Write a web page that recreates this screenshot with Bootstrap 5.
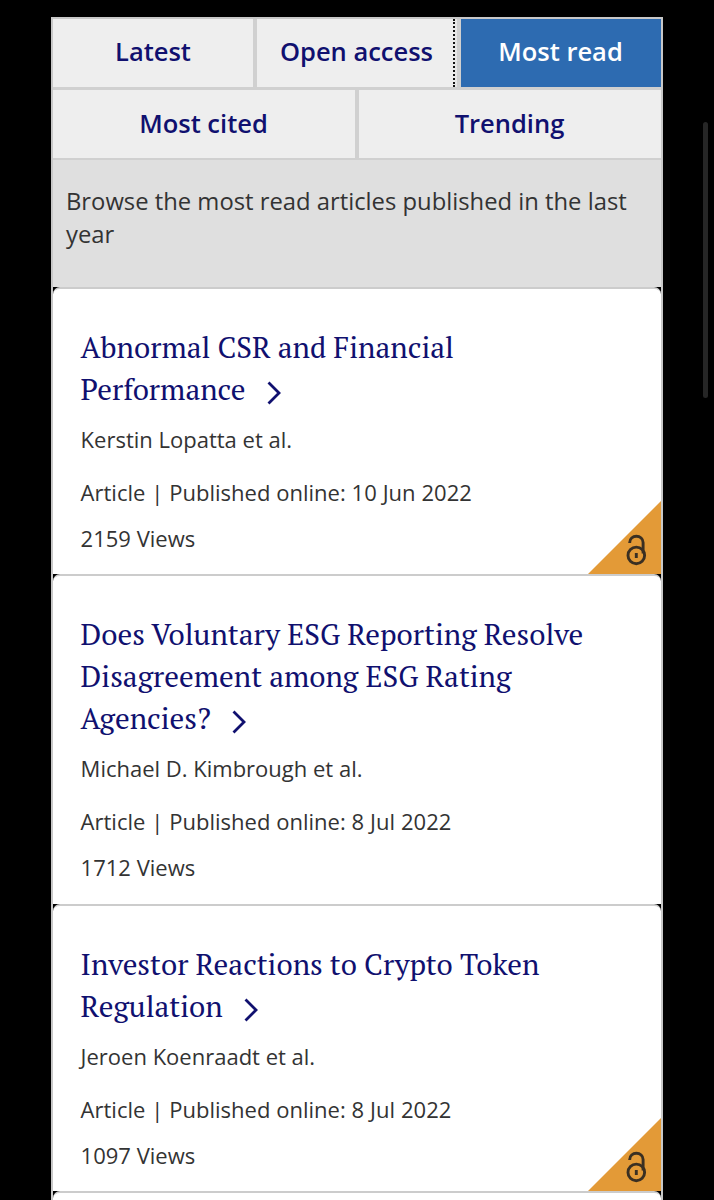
<!DOCTYPE html>
<html lang="en">
<head>
<meta charset="utf-8">
<meta name="viewport" content="width=device-width, initial-scale=1">
<title>Most read articles</title>
<link href="https://cdn.jsdelivr.net/npm/bootstrap@5.3.0/dist/css/bootstrap.min.css" rel="stylesheet">
<script src="https://cdn.jsdelivr.net/npm/bootstrap@5.3.0/dist/js/bootstrap.bundle.min.js" defer></script>
<style>
html,body{height:1200px;overflow:hidden;background:#000}
body{font-family:"Open Sans",sans-serif;color:#333}
.panel{width:612px;height:1183px;margin:17px 0 0 51px;border:solid #c8c8c8;border-width:2px 2px 0;overflow:hidden}
.tabs{background:#d0d0d0;padding-bottom:2px}
.tab-link{flex:1 1 0;height:68px;background:#eee;color:#10106f;font-size:25.5px;font-weight:600;line-height:64px;text-align:center;text-decoration:none;white-space:nowrap}
.tab-link+.tab-link{margin-left:4px}
.tab-link.focused{flex:0 0 198px;padding-left:3px;border-right:2px dotted #111;box-shadow:2px 0 #e6e6e6}
.tab-link.first{flex:0 0 200px}
.tab-link.active{background:#2d6bb1;color:#fff;margin-left:6px;padding-right:1px}
.tab-row+.tab-row{margin-top:3px}
.tab-row+.tab-row .tab-link{line-height:66px;padding-right:1px}
.intro{height:127px;padding:25px 13px 0;background:#dfdfdf;font-size:23.8px;line-height:33px;white-space:nowrap}
.article{background:#fff;border-top:2px solid #ccc;border-radius:7px 7px 0 0;padding:37px 28px 0 27.6px;height:287px}
.article.tall{height:330px}
.article h2{font-family:"PT Serif","Liberation Serif",serif;font-size:29.3px;line-height:42px;color:#10106f;margin:0;font-weight:400;white-space:nowrap}
.article p{margin:0;font-size:22px;line-height:30px;white-space:nowrap}
.article .author{margin-top:14px}
.article .meta{margin-top:23px;word-spacing:.2px}
.article .views{margin-top:15.5px}
.chevron{width:14px;height:24px;margin-left:21.4px;vertical-align:-5px;fill:none;stroke:#10106f;stroke-width:2.8}
.oa{width:74px;height:73px}
.thumb{left:703px;top:122px;width:5px;height:276px;border-radius:3px;background:#262626}
</style>
</head>
<body>
<svg class="d-none">
  <symbol id="chev" viewBox="0 0 14 24"><path d="M1.5 1.5 12 12 1.5 22.5"/></symbol>
  <symbol id="lock" viewBox="0 0 74 73">
    <path d="M74 0V73H1z" fill="#e39a37"/>
    <g fill="none" stroke="#3a2f22" stroke-width="2.9"><circle cx="49.3" cy="54.4" r="8.3"/><path d="M42.7 42v-.6a6.6 6.1 0 0 1 13.4 0v11"/><path d="M49.3 52v5"/></g>
  </symbol>
</svg>
<main class="panel">
  <nav class="tabs">
    <div class="tab-row d-flex">
      <a class="tab-link first" href="#">Latest</a>
      <a class="tab-link focused" href="#">Open access</a>
      <a class="tab-link active" href="#">Most read</a>
    </div>
    <div class="tab-row d-flex">
      <a class="tab-link" href="#">Most cited</a>
      <a class="tab-link" href="#">Trending</a>
    </div>
  </nav>
  <div class="intro">Browse the most read articles published in the last<br>year</div>
  <article class="article position-relative">
    <h2>Abnormal CSR and Financial<br>Performance<svg class="chevron"><use href="#chev"/></svg></h2>
    <p class="author">Kerstin Lopatta et al.</p>
    <p class="meta">Article | Published online: 10 Jun 2022</p>
    <p class="views">2159 Views</p>
    <svg class="oa position-absolute end-0 bottom-0"><use href="#lock"/></svg>
  </article>
  <article class="article tall">
    <h2>Does Voluntary ESG Reporting Resolve<br>Disagreement among ESG Rating<br>Agencies?<svg class="chevron"><use href="#chev"/></svg></h2>
    <p class="author">Michael D. Kimbrough et al.</p>
    <p class="meta">Article | Published online: 8 Jul 2022</p>
    <p class="views">1712 Views</p>
  </article>
  <article class="article position-relative">
    <h2>Investor Reactions to Crypto Token<br>Regulation<svg class="chevron"><use href="#chev"/></svg></h2>
    <p class="author">Jeroen Koenraadt et al.</p>
    <p class="meta">Article | Published online: 8 Jul 2022</p>
    <p class="views">1097 Views</p>
    <svg class="oa position-absolute end-0 bottom-0"><use href="#lock"/></svg>
  </article>
  <article class="article"></article>
</main>
<div class="thumb position-absolute"></div>
</body>
</html>
